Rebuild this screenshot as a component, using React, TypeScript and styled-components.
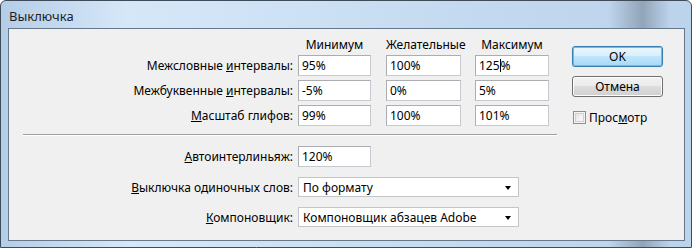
import styled, { createGlobalStyle } from 'styled-components'

const GlobalStyle = createGlobalStyle`
  html, body {
    margin: 0;
    padding: 0;
    background: #ffffff;
  }
  body {
    font-family: 'Noto Sans', 'DejaVu Sans', sans-serif;
    font-size: 12px;
    color: #000;
  }
`

const rows = [
  { label: 'Межсловные ', key: 'и', rest: 'нтервалы:', values: ['95%', '100%', '125%'] },
  { label: 'Межбуквенные ', key: 'и', rest: 'нтервалы:', values: ['-5%', '0%', '5%'] },
  { label: '', key: 'М', rest: 'асштаб глифов:', values: ['99%', '100%', '101%'] },
]

const widths = [73, 75, 74]

export default function App() {
  return (
    <>
      <GlobalStyle />
      <Window>
        <TitleBar>
          <Title>Выключка</Title>
        </TitleBar>
        <Client>
          <Form>
            <Row>
              <Label />
              <Fields>
                <ColHead $w={widths[0]}>Минимум</ColHead>
                <ColHead $w={widths[1]}>Желательные</ColHead>
                <ColHead $w={widths[2]}>Максимум</ColHead>
              </Fields>
            </Row>
            <Rows>
              {rows.map((r, i) => (
                <Row key={i}>
                  <Label>
                    {r.label}
                    <u>{r.key}</u>
                    {r.rest}
                  </Label>
                  <Fields>
                    {r.values.map((v, j) => (
                      <TextBox key={j} $w={widths[j]}>
                        {i === 0 && j === 2 ? (
                          <>
                            125<Caret />%
                          </>
                        ) : (
                          v
                        )}
                      </TextBox>
                    ))}
                  </Fields>
                </Row>
              ))}
            </Rows>
            <Separator />
            <LowerRows>
              <Row>
                <Label>
                  <u>А</u>втоинтерлиньяж:
                </Label>
                <Fields>
                  <TextBox $w={73}>120%</TextBox>
                </Fields>
              </Row>
              <Row>
                <Label>
                  <u>В</u>ыключка одиночных слов:
                </Label>
                <Fields>
                  <Select>
                    <span>По формату</span>
                    <Arrow />
                  </Select>
                </Fields>
              </Row>
              <Row>
                <Label>
                  <u>К</u>омпоновщик:
                </Label>
                <Fields>
                  <Select>
                    <span>Компоновщик абзацев Adobe</span>
                    <Arrow />
                  </Select>
                </Fields>
              </Row>
            </LowerRows>
          </Form>
          <Side>
            <Button $primary>OK</Button>
            <Button>Отмена</Button>
            <CheckRow>
              <CheckBox />
              <span>
                Прос<u>м</u>отр
              </span>
            </CheckRow>
          </Side>
        </Client>
      </Window>
    </>
  )
}

const Window = styled.div`
  position: relative;
  width: 692px;
  height: 248px;
  box-sizing: border-box;
  padding: 0 6px 6px 7px;
  display: flex;
  flex-direction: column;
  border: 1px solid #3e4c5a;
  border-radius: 6px 6px 0 0;
  background:
    linear-gradient(to right, rgba(120, 140, 160, 0) 88%, rgba(110, 125, 140, 0.55) 93%, rgba(120, 140, 160, 0) 97%),
    linear-gradient(to right, #b4cde8 0%, #d6e7f7 18%, #cfe2f5 40%, #c3d9ef 70%, #bcd3ec 100%);
`

const TitleBar = styled.div`
  height: 27px;
  display: flex;
  align-items: center;
  padding-left: 1px;
`

const Title = styled.div`
  font-size: 13px;
  color: #1e1e1e;
  margin-top: 2px;
`

const Client = styled.div`
  flex: 1;
  display: flex;
  background: #f0f0f0;
  border: 1px solid #66788a;
  padding: 9px 0 0 14px;
`

const Form = styled.div`
  width: 534px;
  display: flex;
  flex-direction: column;
`

const Rows = styled.div`
  display: flex;
  flex-direction: column;
  gap: 4px;
  margin-top: 3px;
`

const LowerRows = styled.div`
  display: flex;
  flex-direction: column;
  gap: 10px;
  margin-top: 10px;
`

const Row = styled.div`
  display: flex;
  align-items: center;
`

const Label = styled.div`
  width: 270px;
  text-align: right;
  white-space: nowrap;
  color: #000;
`

const Fields = styled.div`
  display: flex;
  gap: 14px;
  margin-left: 5px;

  & > :nth-child(2) {
    margin-left: 1px;
  }
`

const ColHead = styled.div<{ $w: number }>`
  width: ${(p) => p.$w}px;
  text-align: center;
  height: 14px;
  line-height: 14px;
`

const TextBox = styled.div<{ $w: number }>`
  width: ${(p) => p.$w}px;
  height: 21px;
  box-sizing: border-box;
  border: 1px solid #abadb3;
  border-right-color: #c6c9cf;
  border-bottom-color: #c6c9cf;
  background: #fff;
  padding-left: 3px;
  line-height: 19px;
  white-space: nowrap;
`

const Caret = styled.span`
  display: inline-block;
  width: 1px;
  height: 13px;
  background: #000;
  vertical-align: -2px;
`

const Select = styled.div`
  width: 221px;
  height: 20px;
  box-sizing: border-box;
  border: 1px solid #c2c5ca;
  background: #fff;
  display: flex;
  align-items: center;
  justify-content: space-between;
  padding: 0 7px 0 4px;
  white-space: nowrap;
`

const Arrow = styled.span`
  width: 0;
  height: 0;
  border-left: 3.5px solid transparent;
  border-right: 3.5px solid transparent;
  border-top: 4px solid #000;
  margin-top: 1px;
`

const Separator = styled.div`
  height: 1px;
  margin-top: 8px;
  background: #a0a0a0;
  border-bottom: 1px solid #ffffff;
`

const Side = styled.div`
  display: flex;
  flex-direction: column;
  margin-left: 15px;
  padding-top: 8px;
  gap: 9px;
`

const Button = styled.div<{ $primary?: boolean }>`
  width: 91px;
  height: 21px;
  box-sizing: border-box;
  border-radius: 3px;
  display: flex;
  align-items: center;
  justify-content: center;
  color: #000;
  border: 1px solid ${(p) => (p.$primary ? '#3c7fb1' : '#707070')};
  background: ${(p) =>
    p.$primary
      ? 'linear-gradient(to bottom, #eaf6fd 0%, #d9f0fc 45%, #bee6fd 50%, #a7d9f5 100%)'
      : 'linear-gradient(to bottom, #f2f2f2 0%, #ebebeb 45%, #dddddd 50%, #cfcfcf 100%)'};
  box-shadow: ${(p) =>
    p.$primary ? 'inset 0 0 0 1px #5ec1f1, 0 0 1px #8fd0f4' : 'inset 0 0 0 1px #fcfcfc'};
`

const CheckRow = styled.div`
  display: flex;
  align-items: center;
  gap: 3px;
  margin-top: 3px;
  margin-left: 1px;
`

const CheckBox = styled.div`
  width: 13px;
  height: 13px;
  box-sizing: border-box;
  border: 1px solid #8f8f8f;
  background: linear-gradient(135deg, #dcdcdc 0%, #f4f4f4 60%, #ffffff 100%);
  box-shadow: inset 0 0 0 1px #f4f4f4, inset 0 0 0 2px #d0d0d0;
`
